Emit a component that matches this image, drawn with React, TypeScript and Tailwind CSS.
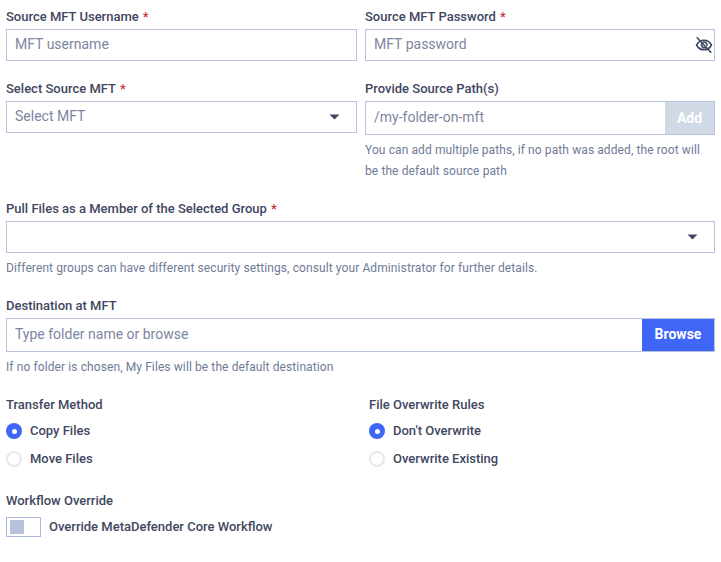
import React from "react";

const labelCls = "block h-[20px] text-[13px] leading-[22px] font-medium text-[#3f4761]";
const hintCls = "text-[12px] leading-[21px] text-[#707b97] tracking-[0.1px]";
const boxCls = "flex items-center border border-[#b7c3dc] bg-white";
const phCls = "text-[14px] leading-[20px] -mt-[2px] text-[#7c86a0]";

function Star() {
  return <span className="ml-[4px] text-[#c8323c]">*</span>;
}

function Caret() {
  return (
    <svg width="11" height="6" viewBox="0 0 11 6" className="block">
      <path d="M0.5 0.5H10.5L5.5 5.5Z" fill="#3f4761" />
    </svg>
  );
}

function EyeOff() {
  return (
    <svg width="18" height="18" viewBox="0 0 18 18" fill="none" stroke="#3f4761" strokeWidth="1.6" strokeLinecap="round" strokeLinejoin="round" className="block">
      <path d="M1.5 9C3.2 5.9 5.9 4.2 9 4.2S14.8 5.9 16.5 9C14.8 12.1 12.1 13.8 9 13.8S3.2 12.1 1.5 9Z" />
      <path d="M6.9 7.2A3 3 0 0 0 11 11.3" />
      <path d="M8.6 6.1A3 3 0 0 1 12 9.4" />
      <path d="M2.2 1.8L15.8 16.2" />
    </svg>
  );
}

function Radio({ on, text }: { on?: boolean; text: string }) {
  return (
    <div className="flex items-center h-[28px]">
      {on ? (
        <span className="flex items-center justify-center w-[16px] h-[16px] rounded-full bg-[#3f66f6]">
          <span className="w-[5px] h-[5px] rounded-full bg-white" />
        </span>
      ) : (
        <span className="w-[16px] h-[16px] rounded-full border-2 border-[#e6e8ee] bg-white" />
      )}
      <span className="ml-[8px] text-[13px] font-medium leading-[20px] text-[#3f4761]">{text}</span>
    </div>
  );
}

export default function App() {
  return (
    <div className="w-[721px] h-[562px] bg-white px-[6px] pt-[6px] overflow-hidden" style={{ fontFamily: "Roboto, sans-serif" }}>
      <div className="grid grid-cols-[351px_350px] gap-x-[8px]">
        <div>
          <label className={labelCls}>Source MFT Username<Star /></label>
          <div className={`${boxCls} h-[32px] mt-[3px] px-[8px]`}><span className={phCls}>MFT username</span></div>
        </div>
        <div>
          <label className={labelCls}>Source MFT Password<Star /></label>
          <div className={`${boxCls} h-[32px] mt-[3px] pl-[8px] pr-[1px] justify-between`}><span className={phCls}>MFT password</span><EyeOff /></div>
        </div>
        <div className="mt-[17px]">
          <label className={labelCls}>Select Source MFT<Star /></label>
          <div className={`${boxCls} h-[32px] mt-[3px] pl-[8px] pr-[16px] justify-between`}><span className={phCls}>Select MFT</span><Caret /></div>
        </div>
        <div className="mt-[17px]">
          <label className={labelCls}>Provide Source Path(s)</label>
          <div className={`${boxCls} h-[34px] mt-[3px] pl-[8px] justify-between`}>
            <span className={phCls}>/my-folder-on-mft</span>
            <span className="flex items-center justify-center w-[49px] h-full bg-[#d2d9e6] text-white text-[14px] font-bold">Add</span>
          </div>
          <p className={`${hintCls} mt-[5px]`}>You can add multiple paths, if no path was added, the root will be the default source path</p>
        </div>
      </div>

      <div className="mt-[16px]">
        <label className={labelCls}>Pull Files as a Member of the Selected Group<Star /></label>
        <div className={`${boxCls} h-[32px] mt-[3px] pr-[16px] justify-end`}><Caret /></div>
        <p className={`${hintCls} mt-[5px]`}>Different groups can have different security settings, consult your Administrator for further details.</p>
      </div>

      <div className="mt-[16px]">
        <label className={labelCls}>Destination at MFT</label>
        <div className={`${boxCls} h-[34px] mt-[3px] pl-[8px] justify-between`}>
          <span className={phCls}>Type folder name or browse</span>
          <span className="flex items-center justify-center w-[72px] h-full pb-[1px] bg-[#3f66f6] text-white text-[14px] font-bold">Browse</span>
        </div>
        <p className={`${hintCls} mt-[5px]`}>If no folder is chosen, My Files will be the default destination</p>
      </div>

      <div className="grid grid-cols-[363px_1fr] mt-[16px]">
        <div>
          <label className={labelCls}>Transfer Method</label>
          <div className="mt-[3px]">
            <Radio on text="Copy Files" />
            <Radio text="Move Files" />
          </div>
        </div>
        <div>
          <label className={labelCls}>File Overwrite Rules</label>
          <div className="mt-[3px]">
            <Radio on text="Don't Overwrite" />
            <Radio text="Overwrite Existing" />
          </div>
        </div>
      </div>

      <div className="mt-[17px]">
        <label className={labelCls}>Workflow Override</label>
        <div className="flex items-center mt-[7px]">
          <span className="flex items-center w-[35px] h-[20px] border border-[#aab8dc] bg-white pl-[3px]">
            <span className="w-[14px] h-[14px] bg-[#b7c3dc]" />
          </span>
          <span className="ml-[8px] text-[13px] font-medium leading-[20px] text-[#3f4761]">Override MetaDefender Core Workflow</span>
        </div>
      </div>
    </div>
  );
}
